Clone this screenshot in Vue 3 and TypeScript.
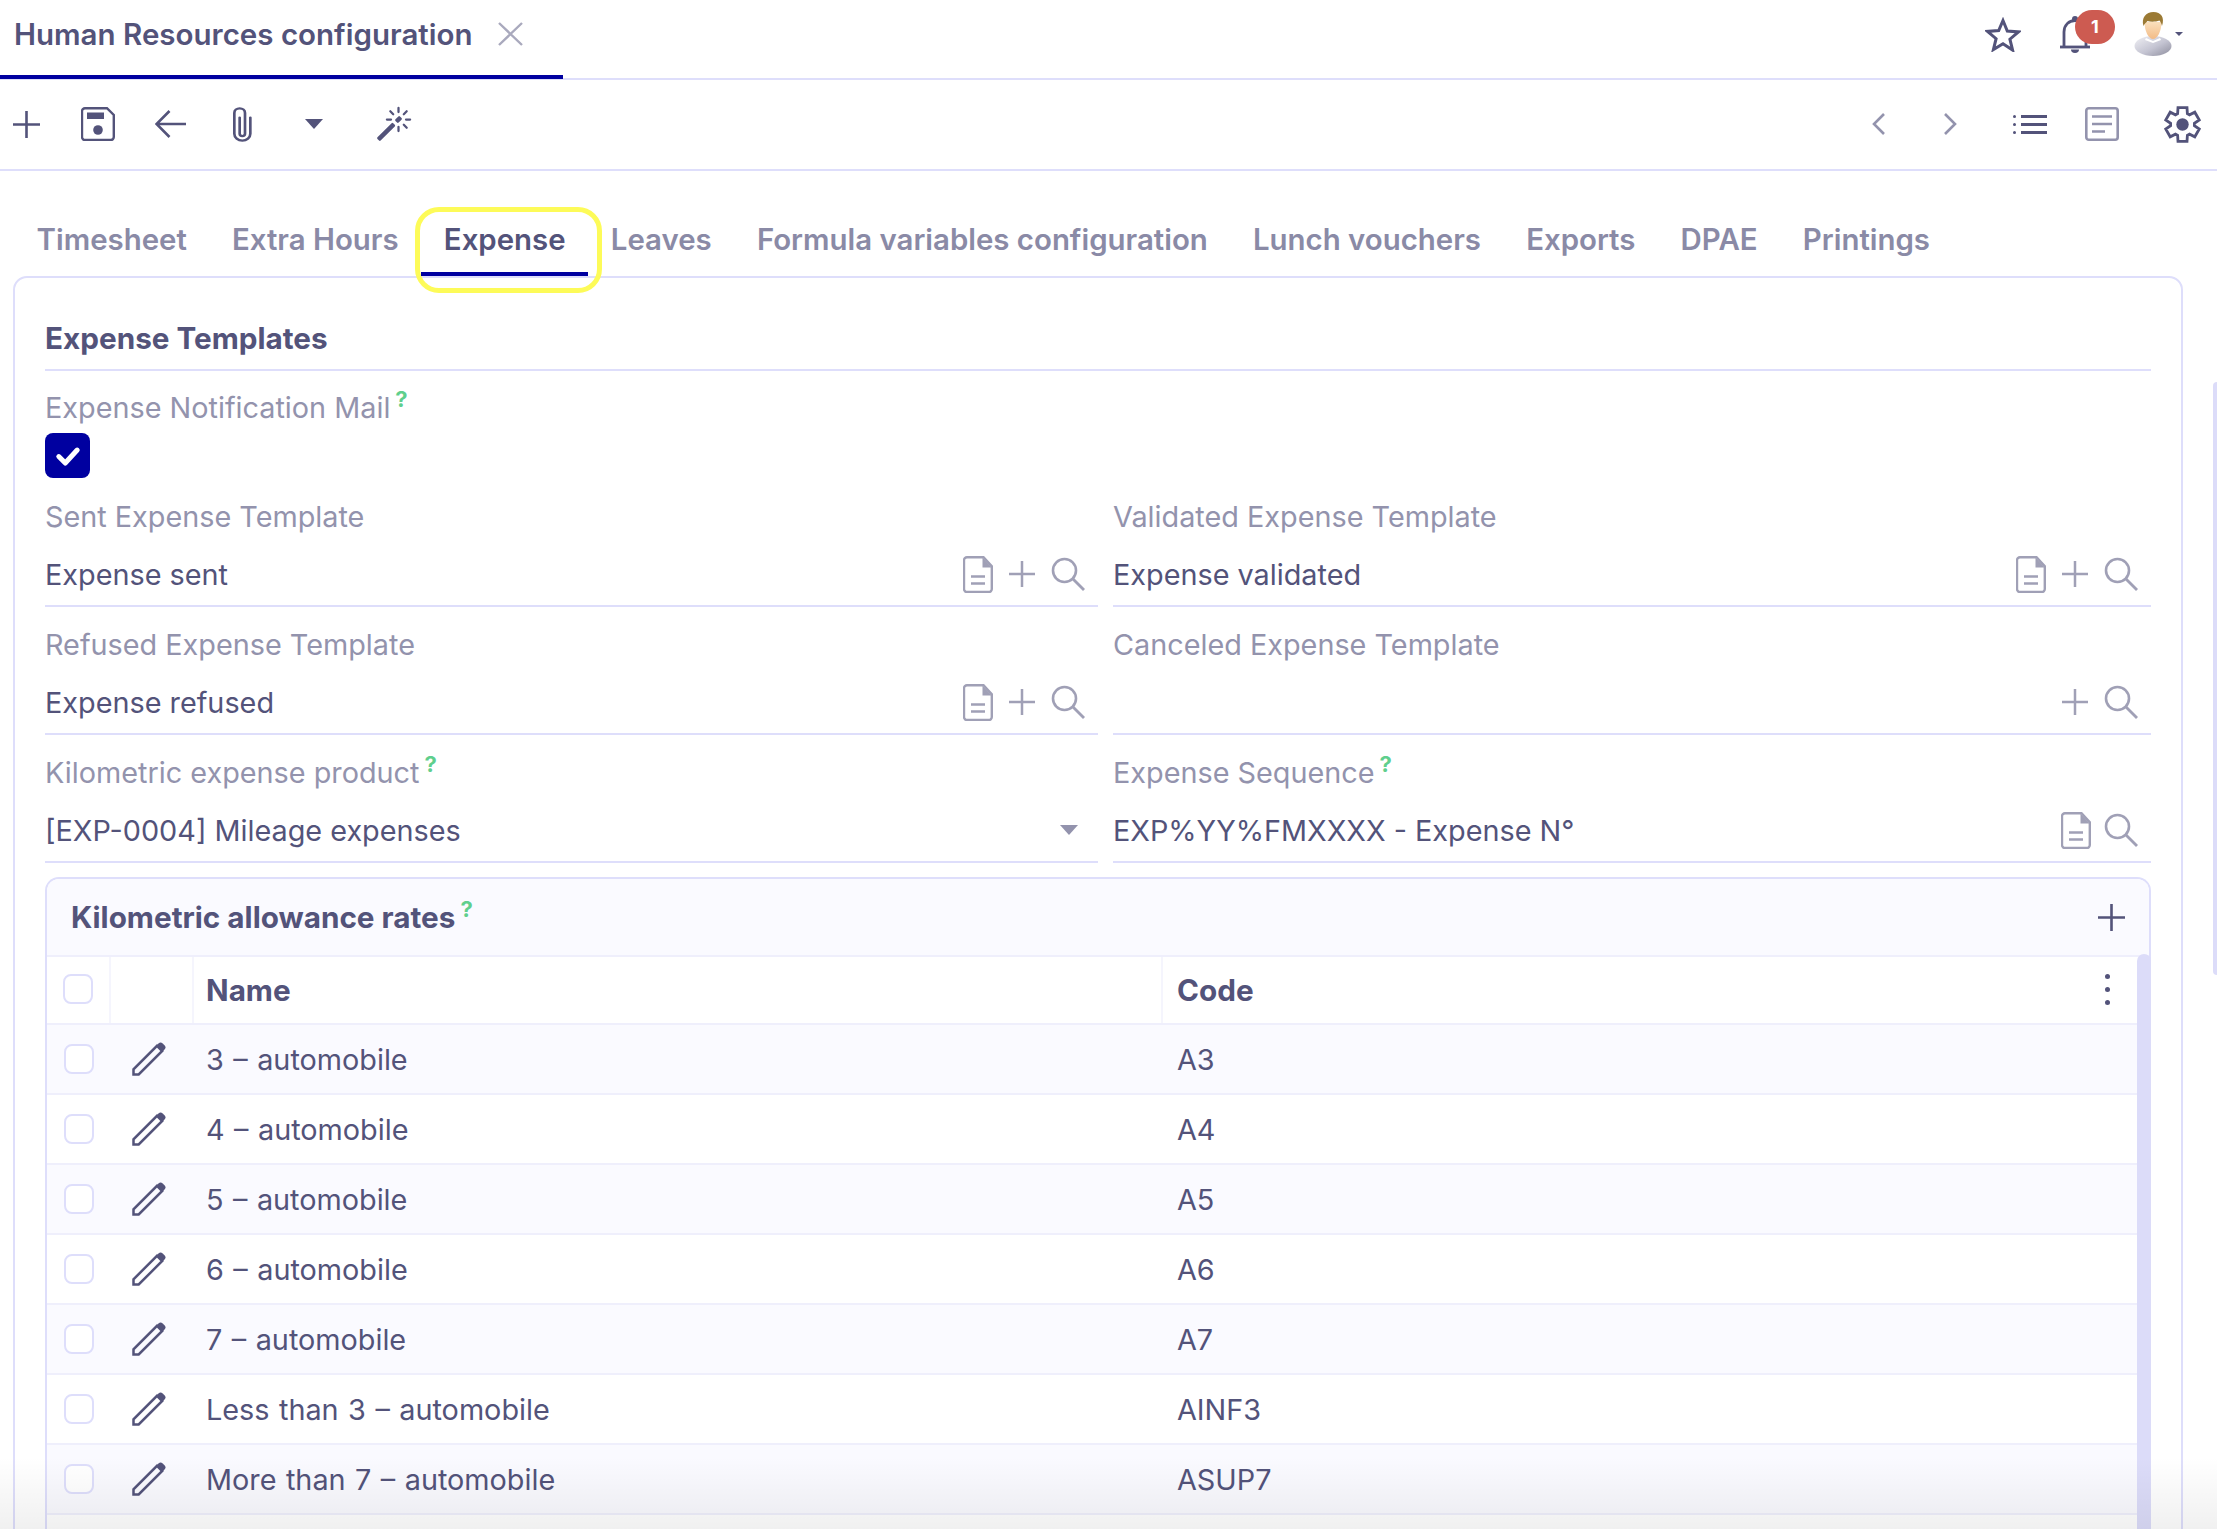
<script setup lang="ts">
type Field = {
  label: string;
  value: string;
  help?: boolean;
  select?: boolean;
  doc?: boolean;
  add?: boolean;
  search?: boolean;
};

const tabs = [
  'Timesheet',
  'Extra Hours',
  'Expense',
  'Leaves',
  'Formula variables configuration',
  'Lunch vouchers',
  'Exports',
  'DPAE',
  'Printings',
];

const fields: Field[] = [
  { label: 'Sent Expense Template', value: 'Expense sent', doc: true, add: true, search: true },
  { label: 'Validated Expense Template', value: 'Expense validated', doc: true, add: true, search: true },
  { label: 'Refused Expense Template', value: 'Expense refused', doc: true, add: true, search: true },
  { label: 'Canceled Expense Template', value: '', add: true, search: true },
  { label: 'Kilometric expense product', value: '[EXP-0004] Mileage expenses', help: true, select: true },
  { label: 'Expense Sequence', value: 'EXP%YY%FMXXXX - Expense N°', help: true, doc: true, search: true },
];

const rates = [
  { name: '3 – automobile', code: 'A3' },
  { name: '4 – automobile', code: 'A4' },
  { name: '5 – automobile', code: 'A5' },
  { name: '6 – automobile', code: 'A6' },
  { name: '7 – automobile', code: 'A7' },
  { name: 'Less than 3 – automobile', code: 'AINF3' },
  { name: 'More than 7 – automobile', code: 'ASUP7' },
];

// cog outline, 6 wide teeth
const gearPath = (() => {
  const pts: string[] = [];
  const teeth = 6;
  const step = (Math.PI * 2) / teeth;
  for (let i = 0; i < teeth; i++) {
    const a = i * step - Math.PI / 2;
    const corners: [number, number][] = [
      [a - step * 0.4, 12],
      [a - step * 0.25, 17.4],
      [a + step * 0.25, 17.4],
      [a + step * 0.4, 12],
    ];
    for (const [ang, r] of corners) {
      pts.push(`${(18.5 + r * Math.cos(ang)).toFixed(2)} ${(18.5 + r * Math.sin(ang)).toFixed(2)}`);
    }
  }
  return `M${pts.join('L')}Z`;
})();
</script>

<template>
  <div class="page">
    <svg class="defs" width="0" height="0">
      <symbol id="i-plus" viewBox="0 0 27 27">
        <path d="M13.5 0v27M0 13.5h27" fill="none" stroke="currentColor" stroke-width="2.6" />
      </symbol>
      <symbol id="i-search" viewBox="0 0 34 34">
        <circle cx="13.5" cy="13.5" r="11.5" fill="none" stroke="currentColor" stroke-width="2.6" />
        <path d="M22 22l11 11" fill="none" stroke="currentColor" stroke-width="2.8" />
      </symbol>
      <symbol id="i-doc" viewBox="0 0 30 37">
        <path
          d="M4 1.200h16.500l8.300 9v22.800a3 3 0 0 1-3 3H4a3 3 0 0 1-3-3V4.200a3 3 0 0 1 3-3z"
          fill="none"
          stroke="currentColor"
          stroke-width="2.400"
        />
        <path d="M19.500 1.500l9.300 10h-9.300z" fill="currentColor" />
        <path d="M8 20.500h14M8 27.500h14" fill="none" stroke="currentColor" stroke-width="2.400" />
      </symbol>
      <symbol id="i-pencil" viewBox="0 0 34 34">
        <path d="M1.500 32.500v-5.200L25 3.800l5.200 5.200L6.700 32.500z" fill="none" stroke="currentColor" stroke-width="2.500" stroke-linejoin="miter" />
        <path d="M24.500 3.500l2-2a3 3 0 0 1 4.200 0l1.800 1.800a3 3 0 0 1 0 4.200l-2 2z" fill="currentColor" />
      </symbol>
      <symbol id="i-check" viewBox="0 0 24 24">
        <path d="M3.500 12.500l6 6L20.500 6.500" fill="none" stroke="currentColor" stroke-width="4.600" stroke-linecap="round" stroke-linejoin="round" />
      </symbol>
    </svg>

    <header class="topbar">
      <div class="view-tab">
        <span class="view-title">Human Resources configuration</span>
        <svg class="close" viewBox="0 0 25 24">
          <path d="M1 1l23 22M24 1L1 23" fill="none" stroke="currentColor" stroke-width="2.400" />
        </svg>
      </div>
      <div class="top-actions">
        <svg class="star" viewBox="0 0 36 35">
          <path d="M18 3.500l4.300 10.500 11.200.9-8.600 7.300 2.700 10.900L18 26.800 8.400 32.600l2.700-10.900-8.600-7.300 11.200-.9z" fill="none" stroke="currentColor" stroke-width="3" stroke-linejoin="miter" />
        </svg>
        <div class="bell">
          <svg viewBox="0 0 30 37">
            <path d="M0 31h30" stroke="currentColor" stroke-width="2.800" />
            <path d="M4 31V16C4 9 9 4.500 15 4.500S26 9 26 16v15" fill="none" stroke="currentColor" stroke-width="2.800" />
            <circle cx="15" cy="3" r="3" fill="currentColor" />
            <path d="M11 33.500h8a4 3.500 0 0 1-8 0z" fill="currentColor" />
          </svg>
          <span class="badge">1</span>
        </div>
        <svg class="avatar" viewBox="0 0 38 44">
          <defs>
            <linearGradient id="shirt" x1="0" y1="0" x2="1" y2="1">
              <stop offset="0" stop-color="#f1f1f5" />
              <stop offset="0.55" stop-color="#c4c4d2" />
              <stop offset="1" stop-color="#8c8c9c" />
            </linearGradient>
            <linearGradient id="skin" x1="0" y1="0" x2="0" y2="1">
              <stop offset="0" stop-color="#fbe0bd" />
              <stop offset="1" stop-color="#f2bb86" />
            </linearGradient>
          </defs>
          <ellipse cx="19" cy="34" rx="18.500" ry="10" fill="url(#shirt)" />
          <path d="M12 26l7 3 7-3 1 2-8 3-8-3z" fill="#fff" />
          <path d="M10.500 10c0 9 4 17 8.500 17s8.500-8 8.500-17z" fill="url(#skin)" />
          <path d="M9.500 14C7 6 12 0 19.500 0S31 5.500 28 14c-.5-2-1.200-4-2.500-5.500-4 1.500-9 1.500-12 .5-1.500 1.500-3 3-4 5z" fill="#9b7a34" />
        </svg>
        <span class="avatar-caret"></span>
      </div>
    </header>

    <nav class="toolbar">
      <div class="tool-group">
        <button type="button" class="tool">
          <svg class="ic-plus"><use href="#i-plus" /></svg>
        </button>
        <button type="button" class="tool">
          <svg class="ic-save" viewBox="0 0 34 34">
            <path d="M4 1.200h22l6.800 6.800v22a3 3 0 0 1-3 3H4a3 3 0 0 1-3-3V4.200a3 3 0 0 1 3-3z" fill="none" stroke="currentColor" stroke-width="2.400" />
            <rect x="6" y="5.500" width="17" height="6.500" fill="currentColor" />
            <circle cx="17" cy="23" r="4.800" fill="currentColor" />
          </svg>
        </button>
        <button type="button" class="tool">
          <svg class="ic-back" viewBox="0 0 31 28">
            <path d="M31 14H2M14.500 1L1.500 14l13 13" fill="none" stroke="currentColor" stroke-width="2.600" />
          </svg>
        </button>
        <button type="button" class="tool">
          <svg class="ic-clip" viewBox="3 0 9 16" preserveAspectRatio="none">
            <path d="M4.500 3a2.500 2.500 0 0 1 5 0v9a1.500 1.500 0 0 1-3 0V5a.5.5 0 0 1 1 0v7a.5.5 0 0 0 1 0V3a1.500 1.500 0 1 0-3 0v9a2.500 2.500 0 0 0 5 0V5a.5.5 0 0 1 1 0v7a3.500 3.500 0 1 1-7 0V3z" fill="currentColor" />
          </svg>
        </button>
        <button type="button" class="tool">
          <span class="caret dark"></span>
        </button>
        <button type="button" class="tool wand-tool">
          <svg class="ic-wand" viewBox="0 0 16 16">
            <path d="M9.500 2.672a.5.5 0 1 0 1 0V.843a.5.5 0 0 0-1 0v1.829Zm4.500.035A.5.5 0 0 0 13.293 2L12 3.293a.5.5 0 1 0 .707.707L14 2.707ZM7.293 4A.5.5 0 1 0 8 3.293L6.707 2A.5.5 0 0 0 6 2.707L7.293 4Zm-.621 2.500a.5.5 0 1 0 0-1H4.843a.5.5 0 1 0 0 1h1.829Zm8.485 0a.5.5 0 1 0 0-1h-1.829a.5.5 0 0 0 0 1h1.829ZM13.293 10A.5.5 0 1 0 14 9.293L12.707 8a.5.5 0 1 0-.707.707L13.293 10ZM9.500 11.157a.5.5 0 0 0 1 0V9.328a.5.5 0 0 0-1 0v1.829Zm1.854-5.097a.5.5 0 0 0 0-.706l-.708-.708a.5.5 0 0 0-.707 0L8.646 5.940a.5.5 0 0 0 0 .707l.708.708a.5.5 0 0 0 .707 0l1.293-1.293Zm-3 3a.5.5 0 0 0 0-.706l-.708-.708a.5.5 0 0 0-.707 0L.646 13.940a.5.5 0 0 0 0 .707l.708.708a.5.5 0 0 0 .707 0L8.354 9.060Z" fill="currentColor" />
          </svg>
        </button>
      </div>
      <div class="tool-group right">
        <button type="button" class="tool muted">
          <svg class="ic-chev" viewBox="0 0 13 22"><path d="M12 1L2 11l10 10" fill="none" stroke="currentColor" stroke-width="2.600" /></svg>
        </button>
        <button type="button" class="tool muted">
          <svg class="ic-chev" viewBox="0 0 13 22"><path d="M1 1l10 10L1 21" fill="none" stroke="currentColor" stroke-width="2.600" /></svg>
        </button>
        <button type="button" class="tool wide">
          <svg class="ic-list" viewBox="0 0 34 19">
            <circle cx="1.500" cy="1.500" r="1.500" fill="currentColor" />
            <circle cx="1.500" cy="9.500" r="1.500" fill="currentColor" />
            <circle cx="1.500" cy="17.500" r="1.500" fill="currentColor" />
            <path d="M8 1.500h26M8 9.500h26M8 17.500h26" stroke="currentColor" stroke-width="3" />
          </svg>
        </button>
        <button type="button" class="tool muted">
          <svg class="ic-note" viewBox="0 0 34 34">
            <rect x="1.300" y="1.300" width="31.400" height="31.400" rx="2.500" fill="none" stroke="currentColor" stroke-width="2.600" />
            <path d="M7 9.500h20M7 17h20M7 24.500h13" stroke="currentColor" stroke-width="2.600" />
          </svg>
        </button>
        <button type="button" class="tool wide">
          <svg class="ic-gear" viewBox="0 0 37 37">
            <path :d="gearPath" fill="none" stroke="currentColor" stroke-width="2.800" stroke-linejoin="miter" />
            <circle cx="18.500" cy="18.500" r="6.200" fill="currentColor" />
          </svg>
        </button>
      </div>
    </nav>

    <div class="tabs">
      <div v-for="tab in tabs" :key="tab" class="tab" :class="{ active: tab === 'Expense' }">{{ tab }}</div>
    </div>

    <section class="panel">
      <h2 class="section-title">Expense Templates</h2>

      <div class="label notify">Expense Notification Mail<sup class="help">?</sup></div>
      <div class="checkbox-on">
        <svg><use href="#i-check" /></svg>
      </div>

      <div class="field-grid">
        <div v-for="field in fields" :key="field.label" class="field">
          <div class="label">{{ field.label }}<sup v-if="field.help" class="help">?</sup></div>
          <div class="value-row">
            <span class="value">{{ field.value }}</span>
            <span class="field-icons">
              <span v-if="field.select" class="caret"></span>
              <svg v-if="field.doc" class="f-doc"><use href="#i-doc" /></svg>
              <svg v-if="field.add" class="f-plus"><use href="#i-plus" /></svg>
              <svg v-if="field.search" class="f-search"><use href="#i-search" /></svg>
            </span>
          </div>
        </div>
      </div>

      <div class="subpanel">
        <div class="sub-head">
          <span class="sub-title">Kilometric allowance rates<sup class="help">?</sup></span>
          <svg class="sub-plus"><use href="#i-plus" /></svg>
        </div>
        <div class="row head">
          <div class="cell c-check"><span class="box"></span></div>
          <div class="cell c-edit"></div>
          <div class="cell c-name">Name</div>
          <div class="cell c-code">
            Code
            <span class="dots"><i></i><i></i><i></i></span>
          </div>
        </div>
        <div v-for="rate in rates" :key="rate.code" class="row">
          <div class="cell c-check"><span class="box"></span></div>
          <div class="cell c-edit"><svg class="pencil"><use href="#i-pencil" /></svg></div>
          <div class="cell c-name">{{ rate.name }}</div>
          <div class="cell c-code">{{ rate.code }}</div>
        </div>
        <div class="table-scroll"></div>
      </div>
    </section>

    <div class="page-scroll"></div>
    <div class="fade"></div>
  </div>
</template>

<style scoped>
.page {
  --ink: #53537a;
  --soft: #9393ad;
  --icon: #a0a0b6;
  --line: #dedefb;
  --thin: #efeffc;
  --blue: #0000a0;
  position: relative;
  width: 2217px;
  height: 1529px;
  overflow: hidden;
  background: #fff;
  color: var(--ink);
  font-family: Inter, "Liberation Sans", sans-serif;
  font-size: 28.8px;
  line-height: 40px;
}

.defs {
  position: absolute;
}

.topbar {
  display: flex;
  justify-content: space-between;
  height: 80px;
  border-bottom: 2px solid var(--line);
  box-sizing: border-box;
}

.view-tab {
  display: flex;
  align-items: center;
  width: 563px;
  height: 79px;
  padding: 0 0 8px 14px;
  box-sizing: border-box;
  border-bottom: 4px solid var(--blue);
}

.view-title {
  font-weight: 600;
  font-size: 29.5px;
  white-space: nowrap;
}

.close {
  width: 25px;
  height: 24px;
  margin-left: 25px;
  color: #a9a9bd;
}

.top-actions {
  position: relative;
  display: flex;
  align-items: flex-start;
  width: 232px;
}

.star {
  width: 36px;
  height: 35px;
  margin-top: 17px;
  color: var(--ink);
}

.bell {
  position: relative;
  width: 30px;
  height: 37px;
  margin: 16px 0 0 39px;
  color: var(--ink);
}

.bell svg {
  display: block;
  width: 30px;
  height: 37px;
}

.badge {
  position: absolute;
  left: 15px;
  top: -6px;
  width: 40px;
  height: 34px;
  border-radius: 17px;
  background: #cd5b51;
  color: #fff;
  font-size: 18px;
  font-weight: 700;
  line-height: 34px;
  text-align: center;
}

.avatar {
  width: 38px;
  height: 44px;
  margin: 12px 0 0 44px;
}

.avatar-caret {
  width: 0;
  height: 0;
  margin: 32px 0 0 3px;
  border-left: 4px solid transparent;
  border-right: 4px solid transparent;
  border-top: 4px solid var(--ink);
}

.toolbar {
  display: flex;
  justify-content: space-between;
  height: 91px;
  border-bottom: 2px solid var(--line);
  box-sizing: border-box;
}

.tool-group {
  display: flex;
  margin-left: -10px;
}

.tool-group.right {
  margin: 0 -1px 0 0;
}

.tool {
  display: flex;
  align-items: center;
  justify-content: center;
  width: 72px;
  height: 89px;
  padding: 0 0 1px;
  border: 0;
  background: none;
  color: var(--ink);
}

.tool.muted {
  color: var(--soft);
}

.tool.wide {
  margin-left: 8px;
}

.wand-tool {
  margin-left: 8px;
}

.ic-plus {
  width: 27px;
  height: 27px;
}

.ic-save {
  width: 34px;
  height: 34px;
}

.ic-back {
  width: 31px;
  height: 28px;
}

.ic-clip {
  width: 24px;
  height: 37px;
  margin-right: 2px;
}

.ic-wand {
  width: 36px;
  height: 36px;
}

.ic-chev {
  width: 13px;
  height: 22px;
}

.ic-list {
  width: 34px;
  height: 19px;
}

.ic-note {
  width: 34px;
  height: 34px;
}

.ic-gear {
  width: 37px;
  height: 37px;
}

.caret {
  display: inline-block;
  width: 0;
  height: 0;
  border-left: 9px solid transparent;
  border-right: 9px solid transparent;
  border-top: 10px solid var(--soft);
}

.field-icons .caret {
  margin-right: 7px;
}

.caret.dark {
  border-top-color: var(--ink);
}

.tabs {
  display: flex;
  height: 105px;
  padding-left: 14px;
}

.tab {
  position: relative;
  padding: 50px 22.6px 0;
  color: #8a8aa6;
  font-size: 29.4px;
  font-weight: 600;
  line-height: 38px;
  white-space: nowrap;
}

.tab.active {
  color: var(--ink);
}

.tab.active::after {
  content: "";
  position: absolute;
  left: 0;
  right: 0;
  bottom: 0;
  height: 4px;
  background: var(--blue);
}

/* yellow marker drawn over the active tab */
.tab.active::before {
  content: "";
  position: absolute;
  left: -6px;
  right: -14px;
  top: 36px;
  bottom: -17px;
  border: 5px solid #fdfb58;
  border-radius: 24px;
}

.panel {
  width: 2170px;
  min-height: 1400px;
  margin-left: 13px;
  padding: 0 30px;
  box-sizing: border-box;
  border: 2px solid var(--line);
  border-radius: 14px 14px 0 0;
}

.section-title {
  margin: 0;
  padding: 40px 0 11px;
  border-bottom: 2px solid var(--line);
  font-size: 29.7px;
  font-weight: 700;
  line-height: 40px;
}

.label {
  color: var(--soft);
  white-space: nowrap;
}

.notify {
  margin-top: 17px;
}

.help {
  margin-left: 5px;
  color: #5fcf8d;
  font-size: 22px;
  font-weight: 700;
  line-height: 0;
  vertical-align: 11px;
}

.checkbox-on {
  display: flex;
  align-items: center;
  justify-content: center;
  width: 45px;
  height: 45px;
  margin: 5px 0 1px;
  border-radius: 8px;
  background: var(--blue);
  color: #fff;
}

.checkbox-on svg {
  width: 26px;
  height: 26px;
}

.field-grid {
  display: grid;
  grid-template-columns: 1053px 1038px;
  column-gap: 15px;
}

.field {
  height: 128px;
  padding-top: 18px;
  box-sizing: border-box;
  border-bottom: 2px solid var(--line);
}

.value-row {
  display: flex;
  align-items: center;
  justify-content: space-between;
  height: 68px;
  padding: 18px 13px 10px 0;
  box-sizing: border-box;
}

.value {
  white-space: nowrap;
}

.field-icons {
  display: flex;
  align-items: center;
  gap: 16px;
  margin-bottom: 2px;
  color: var(--icon);
}

.f-doc {
  width: 30px;
  height: 37px;
}

.f-doc + .f-search {
  margin-left: -3px;
}

.f-plus {
  width: 26px;
  height: 26px;
}

.f-search {
  width: 34px;
  height: 34px;
}

.subpanel {
  position: relative;
  min-height: 800px;
  margin-top: 14px;
  border: 2px solid var(--line);
  border-bottom: 0;
  border-radius: 14px 14px 0 0;
  background: #fff;
}

.sub-head {
  display: flex;
  align-items: center;
  justify-content: space-between;
  height: 78px;
  padding: 0 24px;
  box-sizing: border-box;
  border-bottom: 2px solid var(--thin);
  border-radius: 12px 12px 0 0;
  background: #fafaff;
}

.sub-title {
  font-size: 29.7px;
  font-weight: 700;
}

.sub-plus {
  width: 27px;
  height: 27px;
  color: var(--ink);
}

.row {
  display: grid;
  grid-template-columns: 64px 83px 969px 1fr;
  align-items: stretch;
  height: 70px;
  margin-right: 12px;
  box-sizing: border-box;
  border-bottom: 2px solid var(--thin);
}

.row:nth-child(odd) {
  background: #fafaff;
}

.row.head {
  height: 68px;
  background: #fff;
  font-size: 29.7px;
  font-weight: 700;
}

.cell {
  display: flex;
  align-items: center;
  white-space: nowrap;
}

.head .cell {
  border-right: 2px solid #f5f5fd;
}

.c-check {
  justify-content: center;
}

.c-edit {
  justify-content: center;
  padding-right: 8px;
}

.c-name {
  padding: 2px 0 0 12px;
  word-spacing: 1.4px;
}

.c-code {
  position: relative;
  padding: 2px 0 0 14px;
}

.head .c-name,
.head .c-code {
  padding-top: 0;
}

.head .c-code {
  border-right: 0;
}

.box {
  width: 30px;
  height: 30px;
  box-sizing: border-box;
  border: 2px solid var(--line);
  border-radius: 8px;
  background: #fff;
}

.head .box {
  margin-bottom: 2px;
}

.pencil {
  width: 34px;
  height: 34px;
  color: var(--ink);
}

.dots {
  position: absolute;
  right: 27px;
  top: 17px;
  display: flex;
  flex-direction: column;
  gap: 8px;
}

.dots i {
  width: 5px;
  height: 5px;
  border-radius: 50%;
  background: var(--ink);
}

.table-scroll {
  position: absolute;
  top: 75px;
  right: -2px;
  bottom: 0;
  width: 14px;
  border-radius: 8px 8px 0 0;
  background: #dcdcf9;
}

.page-scroll {
  position: absolute;
  top: 382px;
  right: 0;
  width: 4px;
  height: 593px;
  border-radius: 4px 0 0 4px;
  background: #dcdcf9;
}

.fade {
  position: absolute;
  left: 0;
  right: 0;
  bottom: 0;
  height: 72px;
  background: linear-gradient(rgba(0, 0, 0, 0), rgba(0, 0, 0, 0.06));
  pointer-events: none;
}
</style>
